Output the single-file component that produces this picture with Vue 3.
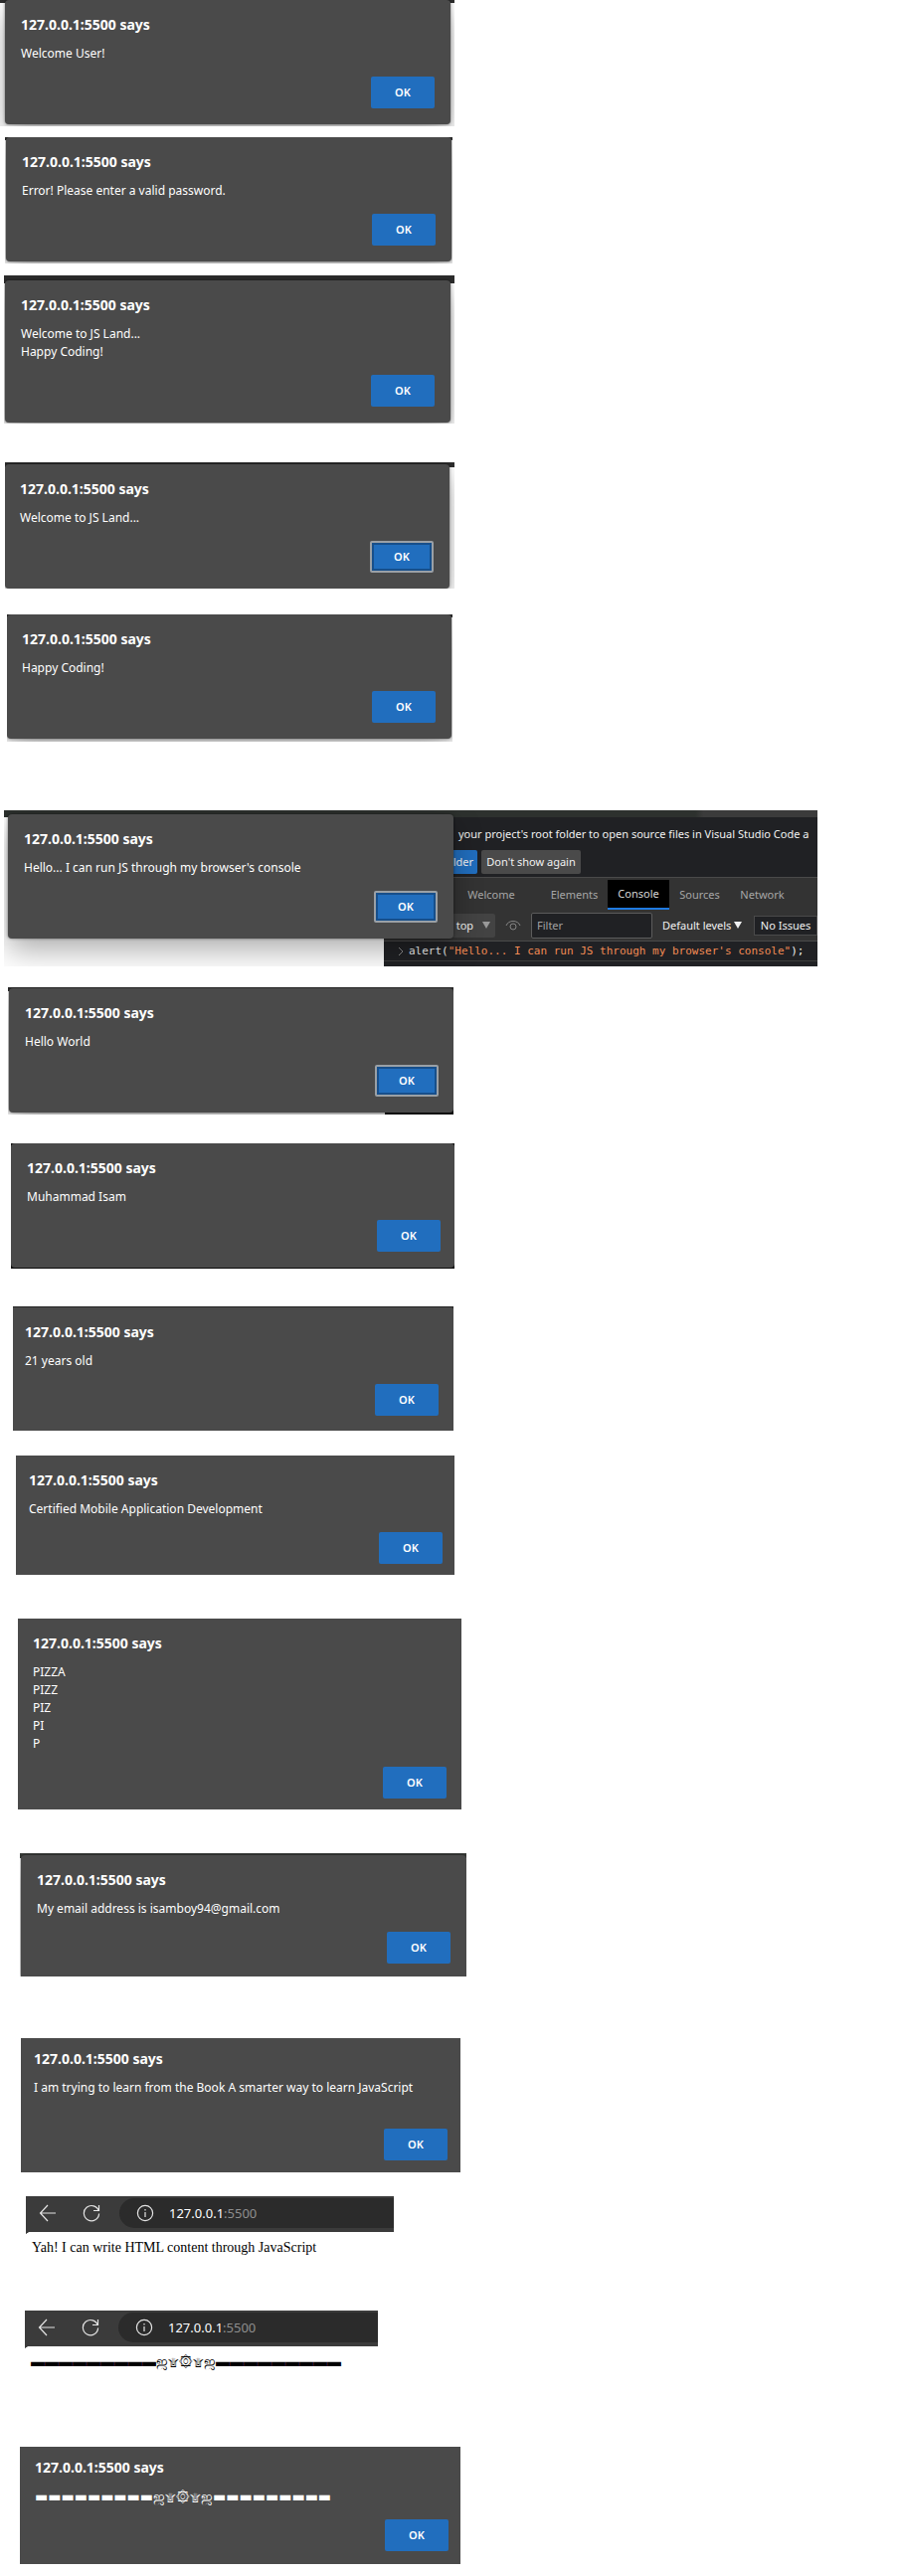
<script setup>
const ornament = '▬▬▬▬▬▬▬▬▬ஜ۩۞۩ஜ▬▬▬▬▬▬▬▬▬'

const alerts = [
  { id: 'user', lines: ['Welcome User!'] },
  { id: 'error', lines: ['Error! Please enter a valid password.'] },
  { id: 'land-two', lines: ['Welcome to JS Land...', 'Happy Coding!'] },
  { id: 'land', lines: ['Welcome to JS Land...'], focused: true },
  { id: 'coding', lines: ['Happy Coding!'] },
  { id: 'console', lines: ["Hello... I can run JS through my browser's console"], focused: true, devtools: true },
  { id: 'world', lines: ['Hello World'], focused: true },
  { id: 'name', lines: ['Muhammad Isam'] },
  { id: 'age', lines: ['21 years old'] },
  { id: 'course', lines: ['Certified Mobile Application Development'] },
  { id: 'pizza', lines: ['PIZZA', 'PIZZ', 'PIZ', 'PI', 'P'] },
  { id: 'email', lines: ['My email address is isamboy94@gmail.com'] },
  { id: 'book', lines: ['I am trying to learn from the Book A smarter way to learn JavaScript', ''] },
  { id: 'html', page: 'Yah! I can write HTML content through JavaScript' },
  { id: 'symbols', page: ornament },
  { id: 'ornament', lines: [ornament] }
]
</script>

<template>
  <main class="sheet">
    <template v-for="item in alerts" :key="item.id">
      <section v-if="item.page" class="browser" :class="item.id">
        <div class="toolbar">
          <button class="nav" aria-label="Back">
            <svg width="18" height="18" viewBox="0 0 18 18"><path d="M17 9H1.500M9 1L1.500 9L9 17" /></svg>
          </button>
          <button class="nav" aria-label="Refresh">
            <svg width="18" height="18" viewBox="0 0 18 18"><path d="M16.300 7A7.600 7.600 0 1 0 16.600 9.500M16.500 1V6.500H11" /></svg>
          </button>
          <div class="address">
            <svg width="18" height="18" viewBox="0 0 18 18"><circle cx="9" cy="9" r="7.600" /><path d="M9 8V13M9 5V6.500" /></svg>
            <span><b>127.0.0.1</b>:5500</span>
          </div>
        </div>
        <div class="corner"></div>
        <p class="page">{{ item.page }}</p>
      </section>

      <section v-else class="shot" :class="item.id">
        <div v-if="item.devtools" class="devtools">
          <p class="hint">your project's root folder to open source files in Visual Studio Code a</p>
          <div class="choices">
            <button class="root">Set root folder</button>
            <button class="dismiss">Don't show again</button>
          </div>
          <nav class="tabs">
            <button class="welcome">Welcome</button>
            <button class="elements">Elements</button>
            <button class="current">Console</button>
            <button>Sources</button>
            <button class="network">Network</button>
          </nav>
          <div class="filters">
            <button class="context">top
              <svg width="8" height="8" viewBox="0 0 8 8"><path d="M0 0H8L4 7Z" /></svg>
            </button>
            <svg class="eye" width="16" height="14" viewBox="0 0 16 14"><path d="M1 7C3 1 13 1 15 7" /><circle cx="8" cy="8" r="3" /></svg>
            <input type="text" placeholder="Filter" aria-label="Filter">
            <button class="levels">Default levels
              <svg width="8" height="8" viewBox="0 0 8 8"><path d="M0 0H8L4 7Z" /></svg>
            </button>
            <button class="issues">No Issues</button>
          </div>
          <div class="prompt">
            <svg width="6" height="10" viewBox="0 0 6 10"><path d="M1 1L5 5L1 9" /></svg>
            <code>alert(<span>"Hello... I can run JS through my browser's console"</span>);</code>
          </div>
        </div>
        <div class="dialog" role="alertdialog" :aria-labelledby="item.id + '-title'">
          <h2 :id="item.id + '-title'">127.0.0.1:5500 says</h2>
          <div class="message">
            <p v-for="(line, i) in item.lines" :key="i">{{ line }}</p>
          </div>
          <button class="ok" :class="{ focused: item.focused }">OK</button>
        </div>
      </section>
    </template>
  </main>
</template>

<style>
body {
  margin: 0;
  background: #fff;
}
</style>

<style scoped>
.sheet {
  display: flex;
  flex-direction: column;
  padding-bottom: 12px;
  font-family: "Noto Sans", "Open Sans", sans-serif;
  font-size: 12px;
  line-height: 18px;
}
h2, p { margin: 0; }
button, input {
  box-sizing: border-box;
  border: 0;
  padding: 0;
  background: none;
  font: inherit;
  color: inherit;
}

.shot {
  --strip: 0px;
  --strip-color: #2d2d2d;
  box-sizing: border-box;
  display: grid;
  width: 100%;
  overflow: hidden;
  background: linear-gradient(var(--strip-color) var(--strip), #fff 0);
}
.dialog {
  display: flex;
  flex-direction: column;
  padding: 15px 16px 16px;
  border-radius: 4px;
  background: #4a4a4a;
  color: #fff;
  box-shadow: 0 0 3px rgba(0, 0, 0, .5), 0 12px 30px rgba(0, 0, 0, .32);
}
.dialog h2 {
  margin-bottom: 10px;
  font-size: 14px;
  line-height: 20px;
  font-weight: 700;
}
.message { margin-bottom: 14px; }
.message p { height: 18px; white-space: nowrap; }
.ok {
  align-self: flex-end;
  width: 64px;
  height: 32px;
  border-radius: 2px;
  background: #216ebe;
  font-size: 11px;
  font-weight: 600;
}
.ok.focused {
  border: 2px solid #9aa0a6;
  box-shadow: inset 0 0 0 2px #174f8b;
}

.user { max-width: 457px; padding: 0 4px 2px 5px; --strip: 3px; }
.error { max-width: 450px; margin: 11px 0 0 5px; padding: 0 1px 2px; --strip: 3px; }
.land-two { max-width: 453px; margin: 12px 0 0 4px; padding: 5px 4px 1px 1px; --strip: 8px; }
.land { max-width: 452px; margin: 39px 0 0 5px; padding: 2px 5px 0 0; --strip: 5px; }
.land .dialog { padding-left: 15px; }
.coding { max-width: 448px; margin: 26px 0 0 7px; padding: 0 1px 3px 0; --strip: 3px; }
.coding .dialog { padding-left: 15px; }
.console {
  max-width: 818px;
  margin: 69px 0 0 4px;
  background:
    linear-gradient(90deg, #2d312e 85%, #3b3b3b 86%) top / 100% 7px no-repeat,
    #fff;
}
.world {
  max-width: 448px;
  margin: 21px 0 0 8px;
  padding: 1px 0 2px 1px;
  background:
    linear-gradient(#2d2d2d, #2d2d2d) top / 100% 4px no-repeat,
    linear-gradient(90deg, #fff 379px, #111 0);
}
.world .dialog { padding-right: 15px; }
.name { max-width: 446px; margin: 29px 0 0 11px; padding-bottom: 1px; background: #111; }
.name .dialog { padding-right: 14px; }
.age { max-width: 443px; margin: 38px 0 0 13px; padding-top: 1px; --strip: 3px; }
.age .dialog { padding: 15px 15px 15px 12px; border-radius: 0 2px 0 0; }
.course { max-width: 441px; margin: 25px 0 0 16px; }
.course .dialog { padding: 15px 12px 11px 13px; border-radius: 0; }
.pizza { max-width: 446px; margin: 44px 0 0 18px; }
.pizza .dialog { padding: 15px 15px 11px; border-radius: 0; }
.email { max-width: 449px; margin: 44px 0 0 20px; padding: 2px 0 0 1px; --strip: 5px; --strip-color: #3b3e3b; }
.email .dialog { padding-bottom: 13px; border-radius: 4px 4px 0 0; }
.book { max-width: 442px; margin: 62px 0 0 21px; }
.book .dialog { padding: 11px 13px 12px; border-radius: 0; }
.ornament { max-width: 443px; margin: 76px 0 0 20px; }
.ornament .dialog { padding: 11px 12px 13px 15px; border-radius: 0; }
.ornament .message { font-family: "DejaVu Sans", sans-serif; font-size: 14px; }

/* The alert floats over the developer tools, sharing one grid cell. */
.console > * { grid-area: 1 / 1; }
.console .dialog {
  z-index: 1;
  align-self: start;
  width: 100%;
  max-width: 448px;
  box-sizing: border-box;
  margin: 4px 0 0 4px;
}
.devtools {
  margin: 7px 0 0 382px;
  padding-bottom: 5px;
  overflow: hidden;
  background: #202124;
  color: #f1f1f1;
  font-size: 11px;
  white-space: nowrap;
}
.hint { padding: 8px 0 7px 75px; }
.choices {
  display: flex;
  gap: 4px;
  padding-bottom: 3px;
  border-bottom: 1px solid #4a4a4a;
}
.choices button { height: 24px; border-radius: 2px; }
.root { width: 94px; padding-right: 4px; background: #216ebe; text-align: right; }
.dismiss { width: 100px; background: #4a4a4a; }
.tabs {
  display: flex;
  height: 32px;
  padding-left: 75px;
  background: #333;
  color: #a6a6a6;
}
.tabs button { flex: none; width: 61px; height: 30px; margin-top: 2px; }
.tabs .welcome { width: 66px; margin-right: 20px; }
.tabs .elements { margin-right: 3px; }
.tabs .network { width: 65px; }
.tabs .current {
  width: 62px;
  border-bottom: 2px solid #1f7ae0;
  background: #000;
  color: #d8d8d8;
}
.filters {
  display: flex;
  align-items: center;
  height: 31px;
  border-bottom: 1px solid #4a4a4a;
  background: #333;
}
.filters > * { flex: none; }
.filters svg path { fill: currentColor; }
.context { width: 112px; height: 24px; padding-right: 5px; border-radius: 2px; background: #434343; text-align: right; }
.context svg { margin-left: 6px; color: #999; }
.filters .eye { margin: 0 10px; fill: none; stroke: #858585; }
.filters .eye path { fill: none; }
.filters input {
  width: 122px;
  height: 26px;
  padding: 0 5px;
  border: 1px solid #5c5c5c;
  border-radius: 2px;
  background: #202124;
}
.filters input::placeholder { color: #a0a0a0; opacity: 1; }
.levels { width: 82px; margin: 0 10px; text-align: left; }
.issues { width: 64px; height: 20px; border: 1px solid #4a4a4a; background: #202124; line-height: 16px; }
.prompt {
  display: flex;
  align-items: center;
  gap: 5px;
  height: 19px;
  padding-left: 14px;
  border-bottom: 1px solid #3c3c3c;
}
.prompt svg { fill: none; stroke: #8a8a8a; }
.prompt code { font: 11px "DejaVu Sans Mono", monospace; }
.prompt code span { color: #f28b54; }

.browser { width: 100%; }
.html { max-width: 370px; margin: 24px 0 0 26px; }
.symbols { max-width: 355px; margin: 54px 0 0 25px; }
.toolbar {
  display: flex;
  box-sizing: border-box;
  height: 36px;
  padding: 2px 0 4px 13px;
  background: #3b3b3b;
}
.nav { width: 18px; height: 30px; margin-right: 26px; }
.nav svg { display: block; }
.toolbar svg { fill: none; stroke: #e4e4e4; stroke-width: 1.2; }
.address {
  display: flex;
  flex: 1;
  align-items: center;
  gap: 15px;
  margin-left: -7px;
  padding-left: 17px;
  border-radius: 15px 0 0 15px;
  background: #2b2b2b;
  color: #8f8f8f;
  font-size: 13px;
}
.address b { font-weight: 400; color: #fff; }
.corner {
  width: 6px;
  height: 3px;
  background: radial-gradient(ellipse at 100% 100%, #fff 70%, #3b3b3b 75%);
}
.page {
  padding: 4px 0 0 6px;
  font-family: "Liberation Serif", serif;
  font-size: 14px;
  color: #000;
  white-space: nowrap;
}
</style>
